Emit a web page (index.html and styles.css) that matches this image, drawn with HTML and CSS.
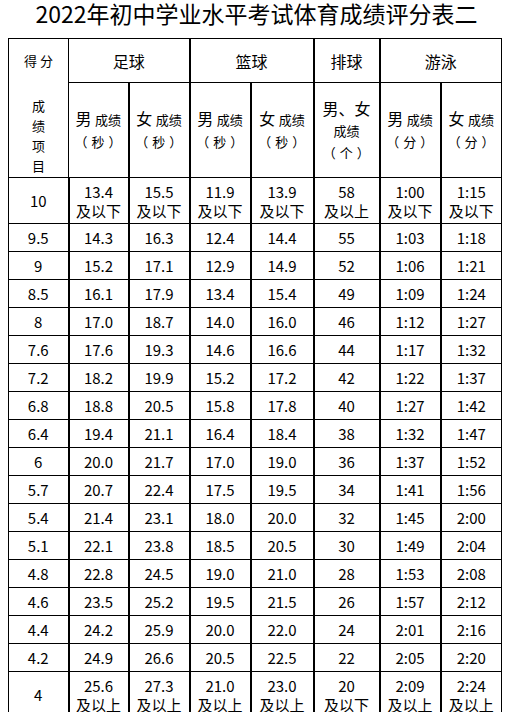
FILE: index.html
```html
<!DOCTYPE html>
<html lang="zh-CN">
<head>
<meta charset="utf-8">
<title>2022年初中学业水平考试体育成绩评分表二</title>
<link rel="stylesheet" href="styles.css">
</head>
<body>
<h1 class="title">2022年初中学业水平考试体育成绩评分表二</h1>
<table class="score">
  <colgroup>
    <col class="c1"><col class="c2"><col class="c3"><col class="c4"><col class="c5"><col class="c6"><col class="c7"><col class="c8">
  </colgroup>
  <thead>
    <tr class="h1">
      <th rowspan="2" class="corner">
        <div class="corner-top">得&nbsp;分</div>
        <div class="corner-vert"><span>成</span><span>绩</span><span>项</span><span>目</span></div>
      </th>
      <th colspan="2" class="grp">足球</th>
      <th colspan="2" class="grp thick">篮球</th>
      <th class="grp thick">排球</th>
      <th colspan="2" class="grp thick">游泳</th>
    </tr>
    <tr class="h2">
      <th class="sub"><span class="big">男</span> <span class="sm">成绩</span><br><span class="unit">（ 秒 ）</span></th>
      <th class="sub thick"><span class="big">女</span> <span class="sm">成绩</span><br><span class="unit">（ 秒 ）</span></th>
      <th class="sub thick"><span class="big">男</span> <span class="sm">成绩</span><br><span class="unit">（ 秒 ）</span></th>
      <th class="sub thick"><span class="big">女</span> <span class="sm">成绩</span><br><span class="unit">（ 秒 ）</span></th>
      <th class="sub thick vb"><span class="big">男、女</span><br><span class="sm">成绩</span><br><span class="unit">（ 个 ）</span></th>
      <th class="sub thick"><span class="big">男</span> <span class="sm">成绩</span><br><span class="unit">（ 分 ）</span></th>
      <th class="sub thick"><span class="big">女</span> <span class="sm">成绩</span><br><span class="unit">（ 分 ）</span></th>
    </tr>
  </thead>
  <tbody>
    <tr class="tall"><td>10</td><td>13.4<br>及以下</td><td>15.5<br>及以下</td><td>11.9<br>及以下</td><td>13.9<br>及以下</td><td>58<br>及以上</td><td>1:00<br>及以下</td><td>1:15<br>及以下</td></tr>
    <tr><td>9.5</td><td>14.3</td><td>16.3</td><td>12.4</td><td>14.4</td><td>55</td><td>1:03</td><td>1:18</td></tr>
    <tr><td>9</td><td>15.2</td><td>17.1</td><td>12.9</td><td>14.9</td><td>52</td><td>1:06</td><td>1:21</td></tr>
    <tr><td>8.5</td><td>16.1</td><td>17.9</td><td>13.4</td><td>15.4</td><td>49</td><td>1:09</td><td>1:24</td></tr>
    <tr><td>8</td><td>17.0</td><td>18.7</td><td>14.0</td><td>16.0</td><td>46</td><td>1:12</td><td>1:27</td></tr>
    <tr><td>7.6</td><td>17.6</td><td>19.3</td><td>14.6</td><td>16.6</td><td>44</td><td>1:17</td><td>1:32</td></tr>
    <tr><td>7.2</td><td>18.2</td><td>19.9</td><td>15.2</td><td>17.2</td><td>42</td><td>1:22</td><td>1:37</td></tr>
    <tr><td>6.8</td><td>18.8</td><td>20.5</td><td>15.8</td><td>17.8</td><td>40</td><td>1:27</td><td>1:42</td></tr>
    <tr><td>6.4</td><td>19.4</td><td>21.1</td><td>16.4</td><td>18.4</td><td>38</td><td>1:32</td><td>1:47</td></tr>
    <tr><td>6</td><td>20.0</td><td>21.7</td><td>17.0</td><td>19.0</td><td>36</td><td>1:37</td><td>1:52</td></tr>
    <tr><td>5.7</td><td>20.7</td><td>22.4</td><td>17.5</td><td>19.5</td><td>34</td><td>1:41</td><td>1:56</td></tr>
    <tr><td>5.4</td><td>21.4</td><td>23.1</td><td>18.0</td><td>20.0</td><td>32</td><td>1:45</td><td>2:00</td></tr>
    <tr><td>5.1</td><td>22.1</td><td>23.8</td><td>18.5</td><td>20.5</td><td>30</td><td>1:49</td><td>2:04</td></tr>
    <tr><td>4.8</td><td>22.8</td><td>24.5</td><td>19.0</td><td>21.0</td><td>28</td><td>1:53</td><td>2:08</td></tr>
    <tr><td>4.6</td><td>23.5</td><td>25.2</td><td>19.5</td><td>21.5</td><td>26</td><td>1:57</td><td>2:12</td></tr>
    <tr><td>4.4</td><td>24.2</td><td>25.9</td><td>20.0</td><td>22.0</td><td>24</td><td>2:01</td><td>2:16</td></tr>
    <tr><td>4.2</td><td>24.9</td><td>26.6</td><td>20.5</td><td>22.5</td><td>22</td><td>2:05</td><td>2:20</td></tr>
    <tr class="tall"><td>4</td><td>25.6<br>及以上</td><td>27.3<br>及以上</td><td>21.0<br>及以上</td><td>23.0<br>及以上</td><td>20<br>及以下</td><td>2:09<br>及以上</td><td>2:24<br>及以上</td></tr>
  </tbody>
</table>
</body>
</html>
```

FILE: styles.css
```css
html, body {
  margin: 0;
  padding: 0;
  background: #fff;
  color: #000;
  font-family: "Noto Sans CJK SC", "Noto Sans", sans-serif;
}

.title {
  margin: 0 0 12px 0;
  height: 26px;
  line-height: 26px;
  font-size: 23px;
  font-weight: normal;
  text-align: center;
}

.score {
  margin: 0 0 0 8px;
  width: 493px;
  table-layout: fixed;
  border-collapse: collapse;
  font-size: 15px;
}

.c1 { width: 60px; }
.c2 { width: 60px; }
.c3 { width: 61px; }
.c4 { width: 61px; }
.c5 { width: 63px; }
.c6 { width: 66px; }
.c7 { width: 61px; }
.c8 { width: 61px; }

.score th,
.score td {
  border: 1px solid #000;
  padding: 0;
  text-align: center;
  vertical-align: middle;
  font-weight: normal;
}

.score td + td {
  border-left: 2px solid #000;
}

.score th.thick {
  border-left: 2px solid #000;
}

.h1 th.grp {
  height: 43px;
  font-size: 16px;
}

.h2 th {
  height: 94px;
  line-height: 21px;
}

.h1 th.corner {
  vertical-align: top;
  font-size: 13px;
}

.corner-top {
  padding-top: 13px;
  line-height: 18px;
}

.corner-vert {
  margin-top: 26px;
  display: flex;
  flex-direction: column;
  align-items: center;
  line-height: 20px;
}

.big {
  font-size: 16px;
}

.sm {
  font-size: 13px;
}

.unit {
  font-size: 13px;
  letter-spacing: 0.5px;
}

.vb {
  line-height: 20px;
}

.score td {
  height: 27px;
  line-height: 19px;
}

.score tr.tall td {
  height: 45px;
}
```
